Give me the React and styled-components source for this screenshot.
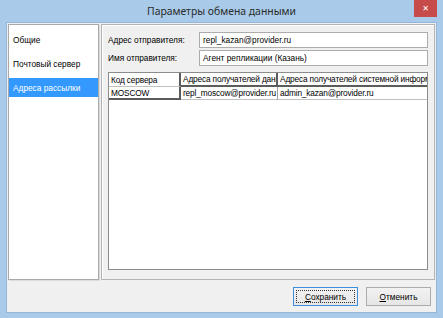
import React from "react";
import styled, { createGlobalStyle } from "styled-components";

const Global = createGlobalStyle`
  html, body { margin: 0; padding: 0; }
  body {
    width: 443px; height: 318px; overflow: hidden;
    background: #a9cbe9;
    font-family: "Liberation Sans", Arial, sans-serif;
  }
  #root { width: 443px; height: 318px; }
`;

const Window = styled.div`
  width: 443px;
  height: 318px;
  display: flex;
  flex-direction: column;
  background: #a9cbe9;
  box-sizing: border-box;
`;

const TitleBar = styled.div`
  position: relative;
  height: 23px;
  flex: none;
  display: flex;
  align-items: center;
  justify-content: center;
  font-family: "Noto Sans", "Open Sans", sans-serif;
  font-size: 10.4px;
  color: #2a2a2a;
  padding-bottom: 1px;
  box-sizing: border-box;
`;

const CloseBtn = styled.div`
  position: absolute;
  top: 0;
  right: 6px;
  width: 23px;
  height: 17px;
  background: #c74b4b;
  color: #fff;
  display: flex;
  align-items: center;
  justify-content: center;
  font-family: "DejaVu Sans", sans-serif;
  font-size: 8px;
  font-weight: bold;
`;

const Body = styled.div`
  flex: 1;
  margin: 0 7px 6px;
  background: #f0f0f0;
  box-shadow: 0 0 0 1px #93b7da;
  display: flex;
  flex-direction: column;
  font-size: 8.3px;
  color: #000;
`;

const Main = styled.div`
  display: flex;
  gap: 2px;
  padding: 1px 1px 0;
  height: 257px;
  box-sizing: border-box;
`;

const NavList = styled.div`
  flex: none;
  width: 91px;
  height: 256px;
  box-sizing: border-box;
  background: #fff;
  border: 1px solid #a9a9a9;
  box-shadow: 1px 1px 0 #dcdcdc;
  padding-top: 5px;
  display: flex;
  flex-direction: column;
  gap: 5px;
`;

const NavItem = styled.div`
  height: 19px;
  display: flex;
  align-items: center;
  padding-left: 4px;
  white-space: nowrap;
  background: ${(p) => (p.$active ? "#3399ff" : "transparent")};
  color: ${(p) => (p.$active ? "#fff" : "#000")};
`;

const Panel = styled.div`
  flex: 1;
  min-width: 0;
  height: 256px;
  box-sizing: border-box;
  border: 1px solid #b4b4b4;
  box-shadow: inset 1px 1px 0 #fff;
  padding: 7px 6px 9px 6px;
  display: flex;
  flex-direction: column;
`;

const FieldRow = styled.div`
  display: flex;
  align-items: center;
  height: 16px;
  margin-bottom: 2px;
`;

const Label = styled.div`
  width: 91px;
  flex: none;
  white-space: nowrap;
`;

const TextBox = styled.div`
  flex: 1;
  min-width: 0;
  height: 16px;
  box-sizing: border-box;
  background: #fff;
  border: 1px solid #acacac;
  display: flex;
  align-items: center;
  padding-left: 3px;
  white-space: nowrap;
`;

const Grid = styled.div`
  margin-top: 4px;
  flex: 1;
  background: #fff;
  border: 1px solid #8c8c8c;
  overflow: hidden;
  display: grid;
  grid-template-columns: 72px 97px 180px;
  grid-auto-rows: min-content;
`;

const Cell = styled.div`
  height: ${(p) => (p.$head ? "14px" : "13px")};
  box-sizing: border-box;
  padding-left: 2px;
  letter-spacing: -0.15px;
  display: flex;
  align-items: center;
  white-space: nowrap;
  overflow: hidden;
  background: #fff;
  border-right: ${(p) => (p.$strong ? "2px solid #5c5c5c" : "1px solid #a0a0a0")};
  border-bottom: ${(p) => (p.$strongBottom ? "2px solid #5c5c5c" : "1px solid #c0c0c0")};
`;

const Footer = styled.div`
  flex: 1;
  display: flex;
  justify-content: flex-end;
  align-items: flex-start;
  gap: 8px;
  padding: 7px 5px 0 0;
`;

const Button = styled.div`
  position: relative;
  width: 65px;
  height: 19px;
  box-sizing: border-box;
  border: 1px solid ${(p) => (p.$default ? "#3c8fe0" : "#acacac")};
  background: linear-gradient(#f2f2f2, #e6e6e6);
  display: flex;
  align-items: center;
  justify-content: center;
  font-size: 8.3px;
  color: #000;
  ${(p) =>
    p.$default &&
    `&::after {
      content: "";
      position: absolute;
      inset: 2px;
      border: 1px dotted #333;
    }`}
  u { text-decoration: underline; }
`;

export default function App() {
  return (
    <>
      <Global />
      <Window>
        <TitleBar>
          Параметры обмена данными
          <CloseBtn>✕</CloseBtn>
        </TitleBar>
        <Body>
          <Main>
            <NavList>
              <NavItem>Общие</NavItem>
              <NavItem>Почтовый сервер</NavItem>
              <NavItem $active>Адреса рассылки</NavItem>
            </NavList>
            <Panel>
              <FieldRow>
                <Label>Адрес отправителя:</Label>
                <TextBox>repl_kazan@provider.ru</TextBox>
              </FieldRow>
              <FieldRow>
                <Label>Имя отправителя:</Label>
                <TextBox>Агент репликации (Казань)</TextBox>
              </FieldRow>
              <Grid>
                <Cell $head $strong>Код сервера</Cell>
                <Cell $head $strong $strongBottom>Адреса получателей данных</Cell>
                <Cell $head $strong $strongBottom>Адреса получателей системной информации</Cell>
                <Cell $strong $strongBottom>MOSCOW</Cell>
                <Cell>repl_moscow@provider.ru</Cell>
                <Cell>admin_kazan@provider.ru</Cell>
              </Grid>
            </Panel>
          </Main>
          <Footer>
            <Button $default><span><u>С</u>охранить</span></Button>
            <Button><span><u>О</u>тменить</span></Button>
          </Footer>
        </Body>
      </Window>
    </>
  );
}
